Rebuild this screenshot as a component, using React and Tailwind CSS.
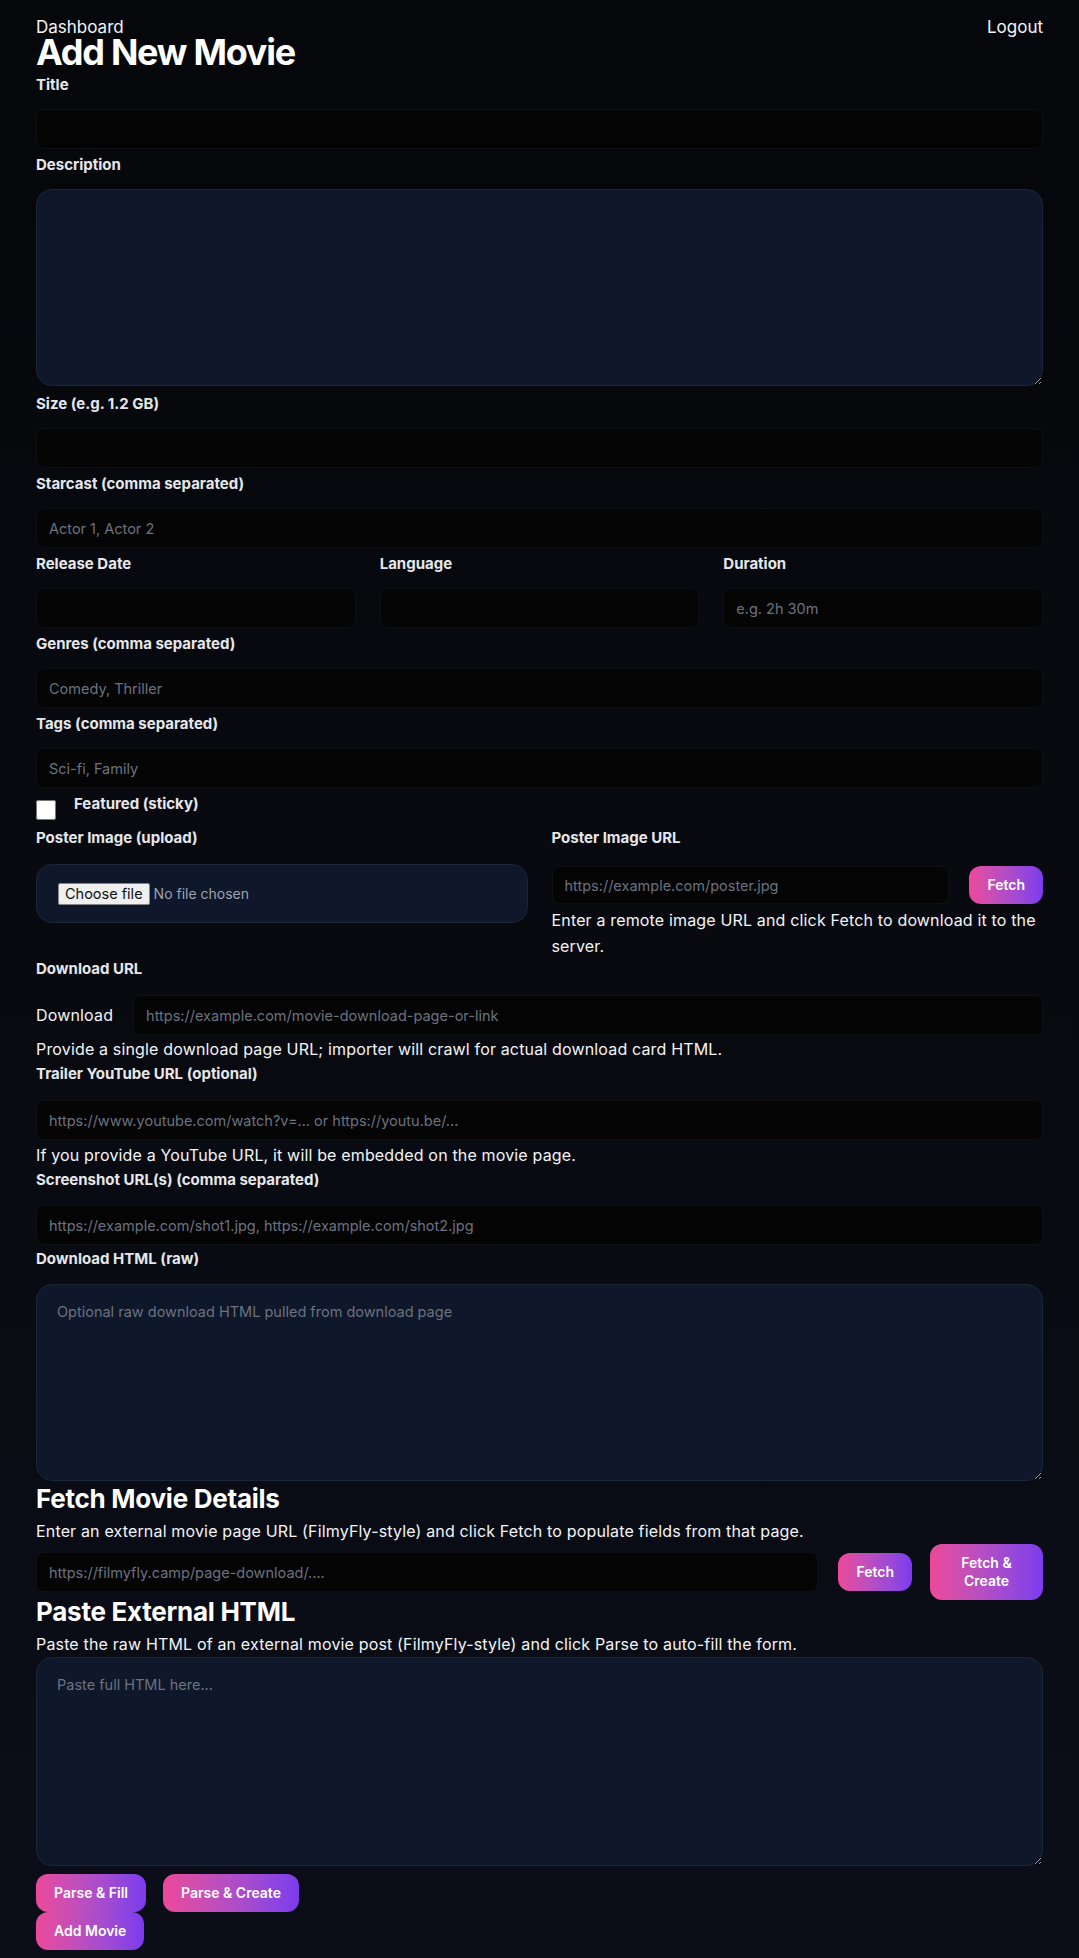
import React from "react";

const labelBase = "block text-[15px] leading-5 font-bold text-[#e5e7eb]";
const labelCls = labelBase + " mb-[14px]";
const inputCls =
  "block w-full h-10 rounded-lg bg-[#040405] border border-[#0e1015] px-3 text-[14.5px] text-gray-100 placeholder:text-[#6b7280] outline-none";
const taCls =
  "block w-full rounded-2xl bg-[#0f172a] border border-[#1c2639] px-5 py-4 text-[14.5px] text-gray-100 placeholder:text-[#6b7280] outline-none";
const btnCls =
  "rounded-xl bg-linear-to-r from-[#ec4899] to-[#7c3aed] text-white text-sm font-semibold leading-[18px] px-[18px] py-[10px] text-center";
const helpCls = "text-base leading-relaxed tracking-[0.01em] text-gray-100";

function Field({ label, children, gap = "mb-[6px]" }) {
  return (
    <div className={gap}>
      <label className={labelCls}>{label}</label>
      {children}
    </div>
  );
}

export default function App() {
  return (
    <div className="min-h-screen bg-linear-to-b from-[#06070a] via-[#080a10] to-[#0b0e18] font-[Inter,sans-serif] text-white">
      <div className="px-9 pt-5 pb-[8px]">
        <header className="flex justify-between items-start">
          <div>
            <div className="text-[17px] leading-[14px] text-gray-100">Dashboard</div>
            <h1 className="text-[36px] leading-[36px] font-bold tracking-[-0.035em] text-white">
              Add New Movie
            </h1>
          </div>
          <button className="text-[17px] leading-[14px] text-gray-100">Logout</button>
        </header>

        <form className="mt-[5px]" onSubmit={(e) => e.preventDefault()}>
          <Field label="Title">
            <input className={inputCls} />
          </Field>
          <Field label="Description" gap="mb-[8px]">
            <textarea className={taCls + " h-[197px]"} />
          </Field>
          <Field label="Size (e.g. 1.2 GB)">
            <input className={inputCls} />
          </Field>
          <Field label="Starcast (comma separated)">
            <input className={inputCls} placeholder="Actor 1, Actor 2" />
          </Field>
          <div className="grid grid-cols-3 gap-x-6">
            <Field label="Release Date">
              <input className={inputCls} />
            </Field>
            <Field label="Language">
              <input className={inputCls} />
            </Field>
            <Field label="Duration">
              <input className={inputCls} placeholder="e.g. 2h 30m" />
            </Field>
          </div>
          <Field label="Genres (comma separated)">
            <input className={inputCls} placeholder="Comedy, Thriller" />
          </Field>
          <Field label="Tags (comma separated)">
            <input className={inputCls} placeholder="Sci-fi, Family" />
          </Field>

          <div className="flex items-start gap-[18px]">
            <input type="checkbox" className="mt-[6px] w-5 h-5 shrink-0" />
            <label className={labelBase + " mb-[14px]"}>Featured (sticky)</label>
          </div>

          <div className="grid grid-cols-2 gap-x-6">
            <div>
              <label className={labelBase + " mb-4"}>Poster Image (upload)</label>
              <label className="h-[59px] rounded-2xl bg-[#0f172a] border border-[#1c2639] px-[21px] flex items-center cursor-pointer">
                <input type="file" className="hidden" />
                <span className="bg-[#efefef] text-[#111] border border-[#858585] rounded-[2px] px-[6px] py-[1px] text-[14.5px] leading-[18px]">
                  Choose file
                </span>
                <span className="ml-[4px] text-[14px] text-[#9ca3af]">No file chosen</span>
              </label>
            </div>
            <div>
              <label className={labelBase + " mb-[18px]"}>Poster Image URL</label>
              <div className="flex items-center gap-5">
                <input
                  className="flex-1 min-w-0 h-[38px] rounded-lg bg-[#040405] border border-[#0e1015] px-3 text-[14.5px] text-gray-100 placeholder:text-[#6b7280] outline-none"
                  placeholder="https://example.com/poster.jpg"
                />
                <button type="button" className={btnCls}>
                  Fetch
                </button>
              </div>
              <p className={"mt-[3px] " + helpCls}>
                Enter a remote image URL and click Fetch to download it to the server.
              </p>
            </div>
          </div>

          <div>
            <label className={labelBase + " mb-4"}>Download URL</label>
            <div className="flex items-center gap-5">
              <span className="text-base tracking-[0.01em] text-gray-100">Download</span>
              <input
                className={inputCls + " flex-1 min-w-0"}
                placeholder="https://example.com/movie-download-page-or-link"
              />
            </div>
            <p className={"mt-px " + helpCls}>
              Provide a single download page URL; importer will crawl for actual download card HTML.
            </p>
          </div>

          <div className="mt-[2px]">
            <label className={labelBase + " mb-4"}>Trailer YouTube URL (optional)</label>
            <input
              className={inputCls}
              placeholder="https://www.youtube.com/watch?v=... or https://youtu.be/..."
            />
            <p className={"mt-[2px] " + helpCls}>
              If you provide a YouTube URL, it will be embedded on the movie page.
            </p>
          </div>

          <div className="mt-[2px] mb-[4px]">
            <label className={labelBase + " mb-[15px]"}>Screenshot URL(s) (comma separated)</label>
            <input
              className={inputCls}
              placeholder="https://example.com/shot1.jpg, https://example.com/shot2.jpg"
            />
          </div>

          <div>
            <label className={labelBase + " mb-[15px]"}>Download HTML (raw)</label>
            <textarea
              className={taCls + " h-[197px]"}
              placeholder="Optional raw download HTML pulled from download page"
            />
          </div>

          <section className="mt-[6px]">
            <h2 className="text-[26px] leading-6 font-bold tracking-[-0.01em] text-white">
              Fetch Movie Details
            </h2>
            <p className={"mt-[7px] " + helpCls}>
              Enter an external movie page URL (FilmyFly-style) and click Fetch to populate fields from that page.
            </p>
            <div className="flex items-center gap-5">
              <input
                className={inputCls + " flex-1 min-w-0"}
                placeholder="https://filmyfly.camp/page-download/...."
              />
              <button type="button" className={btnCls}>
                Fetch
              </button>
              <button type="button" className={btnCls + " w-[113px] -ml-[2px]"}>
                Fetch &amp; Create
              </button>
            </div>
          </section>

          <section>
            <h2 className="text-[26px] leading-6 font-bold tracking-[-0.01em] text-white">
              Paste External HTML
            </h2>
            <p className={"mt-[7px] " + helpCls}>
              Paste the raw HTML of an external movie post (FilmyFly-style) and click Parse to auto-fill the form.
            </p>
            <textarea className={taCls + " h-[209px]"} placeholder="Paste full HTML here..." />
            <div className="mt-2 flex gap-[17px]">
              <button type="button" className={btnCls}>
                Parse &amp; Fill
              </button>
              <button type="button" className={btnCls}>
                Parse &amp; Create
              </button>
            </div>
          </section>

          <button type="submit" className={btnCls + " block"}>
            Add Movie
          </button>
        </form>
      </div>
    </div>
  );
}
